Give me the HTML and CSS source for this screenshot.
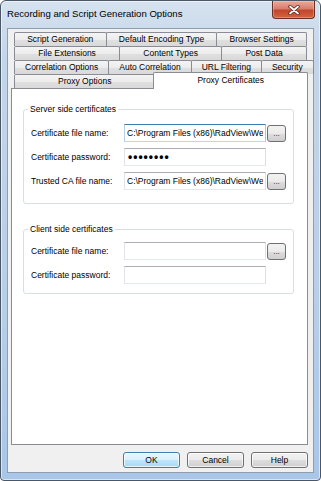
FILE: index.html
```html
<!DOCTYPE html>
<html lang="en">
<head>
    <meta charset="UTF-8">
    <meta name="viewport" content="width=device-width, initial-scale=1.0">
    <title>Recording and Script Generation Options</title>
    <link rel="stylesheet" href="styles.css">
</head>
<body>
    <div class="window">
        <div class="titlebar">
            <span class="title">Recording and Script Generation Options</span>
            <button type="button" class="close-btn" aria-label="Close">
                <svg width="12" height="10" viewBox="0 0 12 10">
                    <path d="M2 1.5 L10 8.5 M10 1.5 L2 8.5" stroke="#5a231b" stroke-width="3.4" stroke-linecap="round"/>
                    <path d="M2 1.5 L10 8.5 M10 1.5 L2 8.5" stroke="#ffffff" stroke-width="1.8" stroke-linecap="round"/>
                </svg>
            </button>
        </div>

        <div class="client">
            <div class="tabs">
                <div class="tab-row">
                    <div class="tab">Script Generation</div>
                    <div class="tab">Default Encoding Type</div>
                    <div class="tab">Browser Settings</div>
                </div>
                <div class="tab-row">
                    <div class="tab">File Extensions</div>
                    <div class="tab">Content Types</div>
                    <div class="tab">Post Data</div>
                </div>
                <div class="tab-row">
                    <div class="tab">Correlation Options</div>
                    <div class="tab">Auto Correlation</div>
                    <div class="tab">URL Filtering</div>
                    <div class="tab">Security</div>
                </div>
                <div class="tab-row">
                    <div class="tab">Proxy Options</div>
                    <div class="tab active">Proxy Certificates</div>
                </div>
            </div>

            <div class="panel">
                <fieldset class="group">
                    <legend>Server side certificates</legend>
                    <div class="field">
                        <label for="srvFile">Certificate file name:</label>
                        <input type="text" id="srvFile" class="text focused" value="C:\Program Files (x86)\RadView\WebLOAD\Certificates\server.pem" readonly>
                        <button type="button" class="browse">...</button>
                    </div>
                    <div class="field">
                        <label for="srvPass">Certificate password:</label>
                        <input type="text" id="srvPass" class="text secret" value="••••••••" readonly>
                    </div>
                    <div class="field">
                        <label for="srvCa">Trusted CA file name:</label>
                        <input type="text" id="srvCa" class="text" value="C:\Program Files (x86)\RadView\WebLOAD\Certificates\ca.pem" readonly>
                        <button type="button" class="browse">...</button>
                    </div>
                </fieldset>

                <fieldset class="group compact">
                    <legend>Client side certificates</legend>
                    <div class="field">
                        <label for="cliFile">Certificate file name:</label>
                        <input type="text" id="cliFile" class="text" value="" readonly>
                        <button type="button" class="browse">...</button>
                    </div>
                    <div class="field">
                        <label for="cliPass">Certificate password:</label>
                        <input type="text" id="cliPass" class="text" value="" readonly>
                    </div>
                </fieldset>
            </div>

            <div class="footer">
                <button type="button" class="btn default">OK</button>
                <button type="button" class="btn">Cancel</button>
                <button type="button" class="btn">Help</button>
            </div>
        </div>
    </div>
</body>
</html>
```

FILE: styles.css
```css
/* Win7 style dialog */
* {
    box-sizing: border-box;
}
body {
    margin: 0;
    font-family: "Liberation Sans", Arial, sans-serif;
    font-size: 8.5px;
    color: #000;
    background: #fff;
}
.window {
    width: 321px;
    height: 481px;
    display: flex;
    flex-direction: column;
    padding: 0 6px 7px 6px;
    border: 1px solid #4a5767;
    border-radius: 6px 6px 4px 4px;
    background: linear-gradient(to bottom, #d6e2ef 0%, #c3d5e9 12%, #b9cfe8 60%, #a9c6e8 100%);
    box-shadow: inset 0 0 0 1px rgba(255, 255, 255, 0.55);
}
.titlebar {
    height: 27px;
    display: flex;
    align-items: flex-start;
}
.title {
    font-size: 9.6px;
    padding: 7px 0 0 0;
    white-space: nowrap;
}
.close-btn {
    margin-left: auto;
    margin-right: -1px;
    width: 43px;
    height: 18px;
    padding: 0;
    display: flex;
    align-items: center;
    justify-content: center;
    border: 1px solid #6b2e25;
    border-top: none;
    border-radius: 0 0 4px 4px;
    background: linear-gradient(to bottom, #e9a99c 0%, #d77f6c 45%, #c2462d 55%, #d2643f 100%);
    box-shadow: inset 0 0 0 1px rgba(255, 220, 210, 0.35);
}
.client {
    flex: 1;
    display: flex;
    flex-direction: column;
    background: #f0f0f0;
    border: 1px solid #8e9db0;
    padding: 3px 5px 4px 3px;
}

/* tabs */
.tab-row {
    display: flex;
    margin: 0 1px 0 3px;
}
.tab {
    flex: 1 1 auto;
    height: 14px;
    line-height: 13px;
    padding: 0 10px;
    text-align: center;
    white-space: nowrap;
    border: 1px solid #898c95;
    border-bottom: none;
    border-radius: 2px 2px 0 0;
    background: linear-gradient(to bottom, #f4f4f4 0%, #ececec 50%, #e0e0e0 51%, #d9d9d9 100%);
}
.tab + .tab {
    margin-left: -1px;
}
.tab.active {
    position: relative;
    z-index: 1;
    height: 17px;
    margin: -2px -1px -1px -2px;
    line-height: 14px;
    background: #fff;
}
.panel {
    flex: 1;
    background: #fff;
    border: 1px solid #898c95;
    padding: 15px 13px 0 11px;
}

/* group boxes */
.group {
    margin: 0;
    border: 1px solid #d5dfe5;
    border-radius: 3px;
    padding: 10px 6px 13px 7px;
}
.group.compact {
    margin-top: 20px;
    padding: 8px 6px 9px 7px;
}
.group legend {
    line-height: 10px;
    padding: 0 2px;
    margin-left: -3px;
}
.field {
    display: flex;
    align-items: center;
    height: 18px;
}
.field + .field {
    margin-top: 6px;
}
.field label {
    flex: 0 0 93px;
    white-space: nowrap;
}
.text {
    width: 142px;
    height: 18px;
    padding: 0 2px;
    font-family: inherit;
    font-size: 8.5px;
    color: #000;
    border: 1px solid;
    border-color: #abadb3 #dbdfe6 #e3e9ef #e2e3ea;
    background: #fff;
    outline: none;
}
.text.focused {
    border-color: #3d7bad #a4c9e3 #b7d9ed #b5cfe7;
}
.text.secret {
    font-size: 12px;
    font-weight: bold;
    letter-spacing: 1px;
    padding-left: 3px;
}
.browse {
    width: 19px;
    height: 17px;
    margin-left: 1px;
    padding: 0 0 3px 0;
    font-family: inherit;
    font-size: 8px;
    line-height: 8px;
    color: #222;
    border: 1px solid #707070;
    border-radius: 3px;
    background: linear-gradient(to bottom, #f2f2f2 0%, #ebebeb 50%, #dddddd 51%, #cfcfcf 100%);
    display: flex;
    align-items: flex-end;
    justify-content: center;
}

/* buttons */
.footer {
    display: flex;
    justify-content: flex-end;
    gap: 7px;
    margin-top: 7px;
}
.btn {
    width: 57px;
    height: 16px;
    padding: 0;
    font-family: inherit;
    font-size: 8.5px;
    color: #000;
    border: 1px solid #707070;
    border-radius: 3px;
    background: linear-gradient(to bottom, #f2f2f2 0%, #ebebeb 50%, #dddddd 51%, #cfcfcf 100%);
    box-shadow: inset 0 0 0 1px rgba(255, 255, 255, 0.7);
}
.btn.default {
    border-color: #3c7fb1;
    background: linear-gradient(to bottom, #eaf6fd 0%, #d9f0fc 50%, #bee6fd 51%, #a7d9f5 100%);
}
```
